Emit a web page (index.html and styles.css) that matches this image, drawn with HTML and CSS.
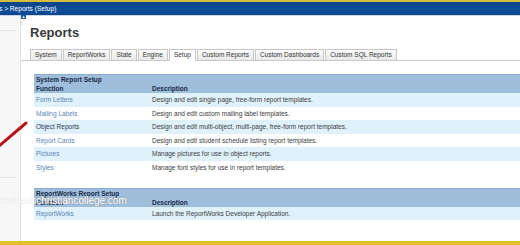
FILE: index.html
```html
<!DOCTYPE html>
<html>
<head>
<meta charset="utf-8">
<link rel="stylesheet" href="styles.css">
</head>
<body>
<div class="page">
  <div class="topbar"><span class="crumb">s &gt; Reports (Setup)</span></div>
  <div class="shell">
    <div class="sidebar">
      <div class="side-item"></div>
      <div class="side-item tall"></div>
    </div>
    <div class="main">
      <div class="pin">&#9650;</div>
      <div class="dots">:</div>
      <h1 class="title">Reports</h1>
      <div class="tabs">
        <span class="tab">System</span>
        <span class="tab">ReportWorks</span>
        <span class="tab">State</span>
        <span class="tab">Engine</span>
        <span class="tab active">Setup</span>
        <span class="tab">Custom Reports</span>
        <span class="tab">Custom Dashboards</span>
        <span class="tab">Custom SQL Reports</span>
      </div>
      <div class="panel">
        <div class="grid">
          <div class="head">
            <div class="head-title">System Report Setup</div>
            <div class="head-cols"><span>Function</span><span>Description</span></div>
          </div>
          <div class="row alt"><span class="link">Form Letters</span><span>Design and edit single page, free-form report templates.</span></div>
          <div class="row"><span class="link">Mailing Labels</span><span>Design and edit custom mailing label templates.</span></div>
          <div class="row alt"><span class="plain">Object Reports</span><span>Design and edit multi-object, multi-page, free-form report templates.</span></div>
          <div class="row"><span class="link">Report Cards</span><span>Design and edit student schedule listing report templates.</span></div>
          <div class="row alt"><span class="link">Pictures</span><span>Manage pictures for use in object reports.</span></div>
          <div class="row"><span class="link">Styles</span><span>Manage font styles for use in report templates.</span></div>
        </div>
        <div class="grid second">
          <div class="head">
            <div class="head-title">ReportWorks Report Setup</div>
            <div class="head-cols"><span>Function</span><span>Description</span></div>
          </div>
          <div class="row alt"><span class="link">ReportWorks</span><span>Launch the ReportWorks Developer Application.</span></div>
        </div>
      </div>
    </div>
  </div>
  <div class="footer"></div>
  <svg class="stroke" width="30" height="30" viewBox="0 0 30 30"><line x1="-1" y1="26" x2="26" y2="3" stroke="#c4161c" stroke-width="3" stroke-linecap="round"/><line x1="-1" y1="27" x2="26" y2="4" stroke="#8e0c10" stroke-width="0.8" stroke-linecap="round"/></svg>
  <div class="mark"><span class="mark-a">thefresh</span><span class="mark-b">christiancollege.com</span></div>
</div>
</body>
</html>
```
FILE: styles.css
```css
html, body {
  margin: 0;
  padding: 0;
  background: #ffffff;
}
body {
  width: 520px;
  height: 245px;
  overflow: hidden;
  font-family: "Liberation Sans", Arial, sans-serif;
}
.page {
  position: relative;
  width: 520px;
  height: 245px;
  display: flex;
  flex-direction: column;
  overflow: hidden;
}
.topbar {
  height: 13px;
  border-top: 2px solid #d6bd3e;
  border-bottom: 1px solid #cdd7e4;
  background: linear-gradient(#0a4589, #0f4d96 60%, #0c4890);
  display: flex;
  align-items: center;
}
.crumb {
  color: #ffffff;
  font-size: 6.6px;
  margin-left: -1px;
  white-space: nowrap;
}
.shell {
  flex: 1;
  display: flex;
  min-height: 0;
}
.sidebar {
  width: 20px;
  background: #f7f7f7;
  border-right: 1px solid #e2e2e2;
  display: flex;
  flex-direction: column;
}
.side-item {
  height: 14px;
  border-bottom: 1px solid #e4e4e4;
  width: 16px;
}
.side-item.tall {
  height: 146px;
}
.main {
  position: relative;
  flex: 1;
  padding-left: 9px;
  min-width: 0;
}
.pin {
  position: absolute;
  left: 0;
  top: -1px;
  width: 5px;
  height: 4px;
  background: #1b56a6;
  color: #fff;
  font-size: 4px;
  line-height: 4px;
  text-align: center;
}
.dots {
  position: absolute;
  left: 0;
  top: 4px;
  font-size: 6px;
  color: #333;
}
.title {
  margin: 9px 0 0 0;
  font-size: 13px;
  line-height: 16px;
  font-weight: bold;
  color: #3a3a3a;
}
.tabs {
  margin: 8px 0 0 -9px;
  padding-left: 9px;
  display: flex;
  gap: 1px;
  border-bottom: 1px solid #c9c9c9;
  height: 11px;
  align-items: flex-end;
}
.tab {
  height: 10px;
  padding: 0 4px;
  border: 1px solid #c6c6c6;
  border-bottom: none;
  background: linear-gradient(#fbfbfb, #e9e9e9);
  font-size: 6.5px;
  line-height: 10px;
  color: #333;
  white-space: nowrap;
}
.tab.active {
  background: #ffffff;
  height: 11px;
  margin-bottom: -1px;
}
.panel {
  padding: 13px 0 0 4px;
  width: 560px;
}
.grid {
  display: flex;
  flex-direction: column;
}
.grid.second {
  margin-top: 13.5px;
}
.head {
  background: #9ebedc;
  border-top: 1px solid #88abce;
  height: 18px;
  font-weight: bold;
  font-size: 6.5px;
  color: #1a2a44;
}
.head-title {
  line-height: 9px;
  padding-left: 2px;
}
.head-cols {
  display: grid;
  grid-template-columns: 116px 1fr;
  line-height: 10px;
  padding-left: 2px;
}
.row {
  display: grid;
  grid-template-columns: 116px 1fr;
  height: 13.5px;
  line-height: 13.5px;
  padding-left: 2px;
  font-size: 6.5px;
  color: #3c3c3c;
  white-space: nowrap;
}
.row.alt {
  background: #dff1fb;
}
.link {
  color: #5a85b6;
}
.plain {
  color: #2b3850;
}
.footer {
  height: 4px;
  background: #dec12c;
}
.stroke {
  position: absolute;
  left: 0;
  top: 120px;
}
.mark {
  position: absolute;
  left: 0;
  top: 195px;
  font-size: 10px;
  white-space: nowrap;
}
.mark-a {
  color: #eeeeee;
}
.mark-b {
  color: #ffffff;
  text-shadow: 0 0 1px #9a9a9a, 0 0 1px #9a9a9a;
}
```
